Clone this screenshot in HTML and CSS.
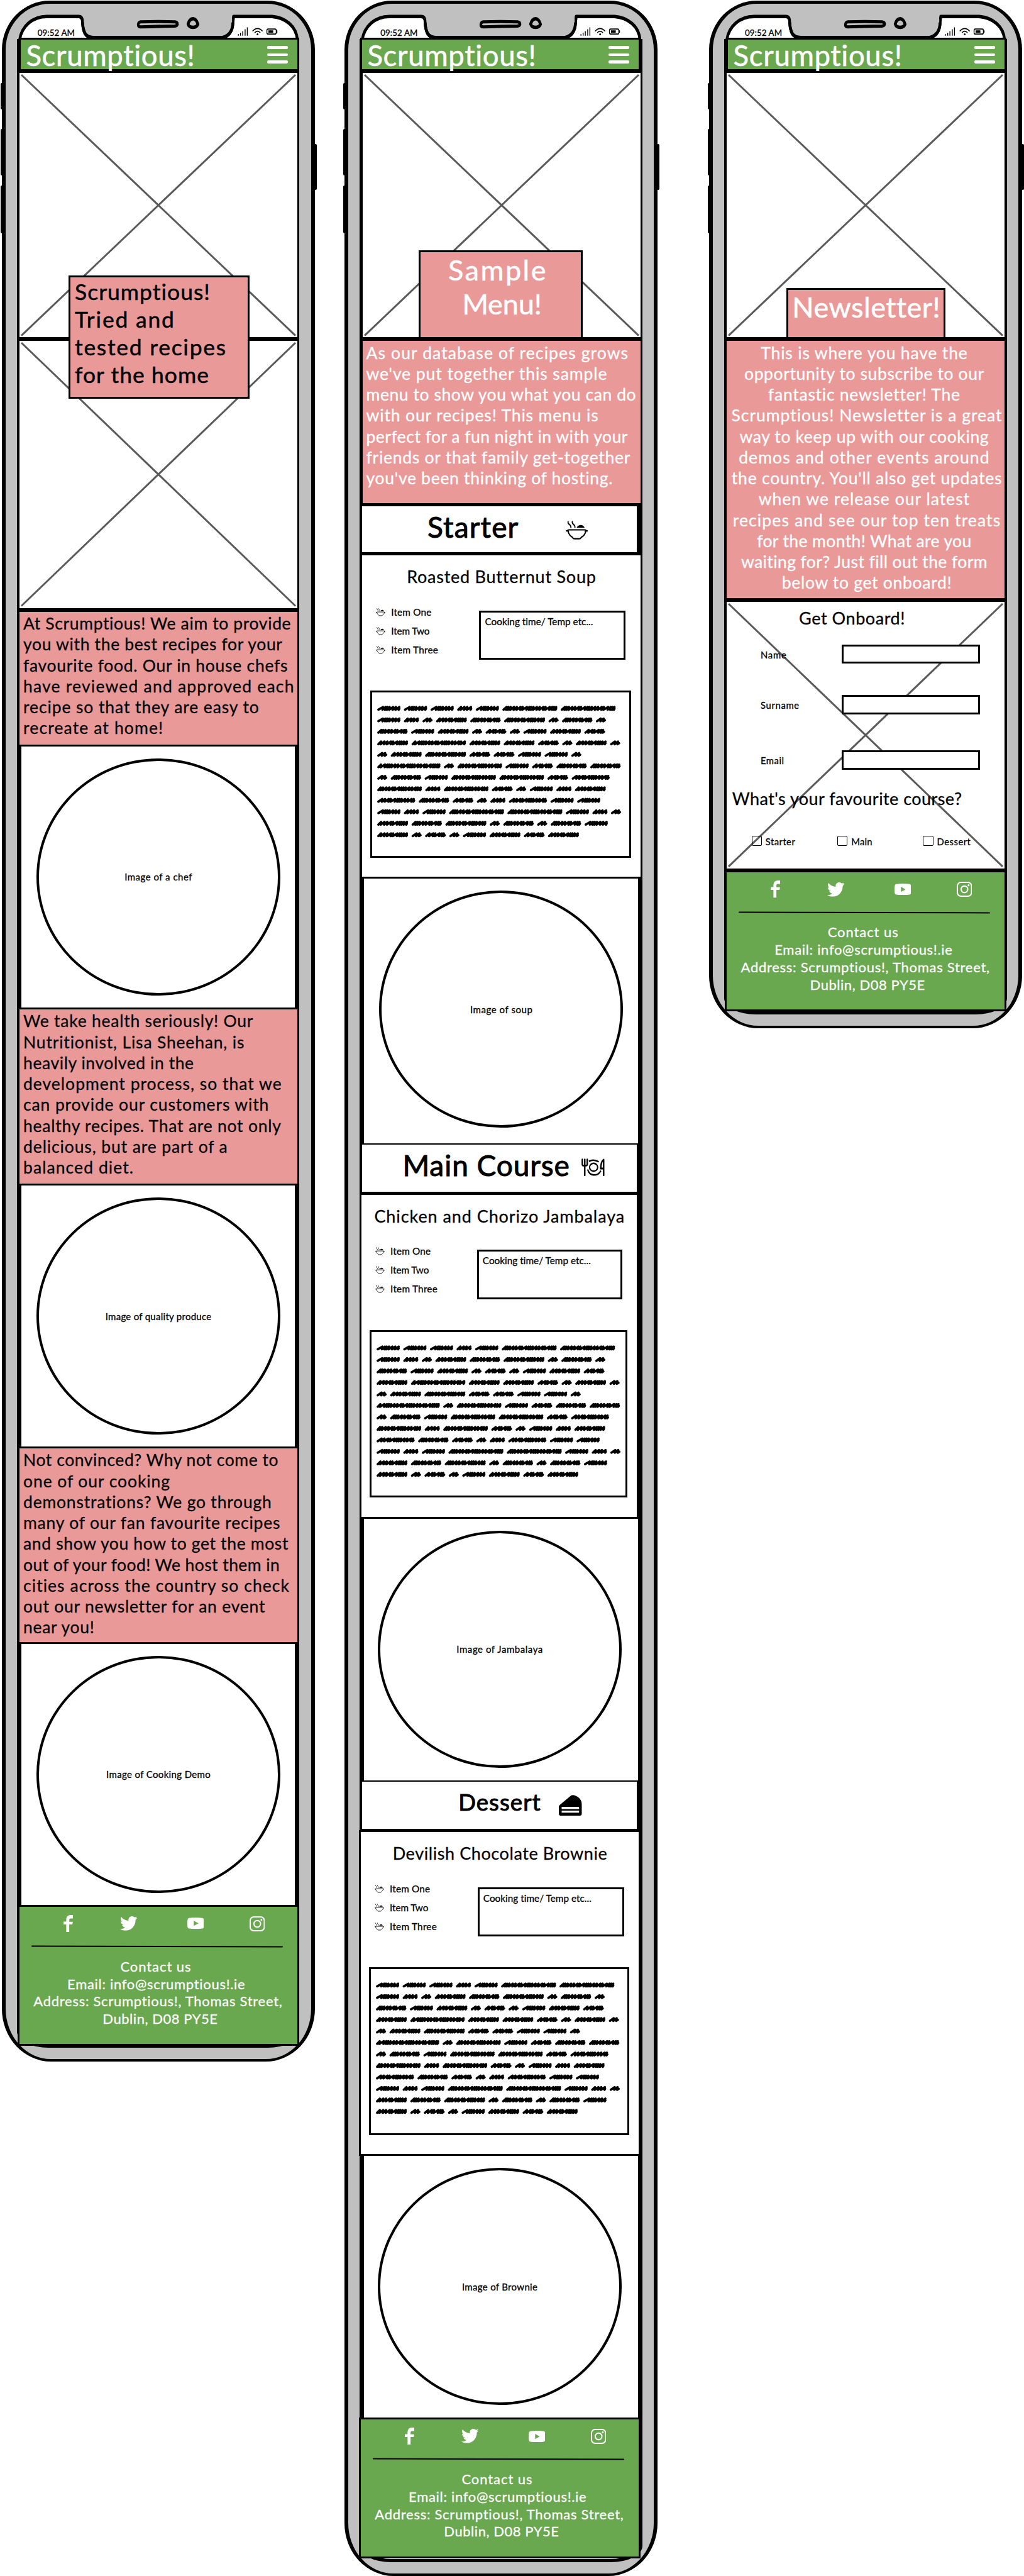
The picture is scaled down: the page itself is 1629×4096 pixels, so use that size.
FILE: index.html
```html
<!DOCTYPE html>
<html lang="en">
<head>
<meta charset="utf-8">
<title>Scrumptious! mobile wireframes</title>
<link rel="stylesheet" href="styles.css">
</head>
<body>
<svg class="defs" aria-hidden="true">
  <symbol id="top" viewBox="0 0 1460 150" preserveAspectRatio="none">
    <path d="M90 150C100 98 150 62 215 62H362Q379 62 379 84C382 122 392 141 430 141H1022Q1068 132 1070 84L1073 62H1250C1310 66 1362 98 1366 150Z" fill="#fff" stroke="#000" stroke-width="13" stroke-linejoin="round"/>
    <path d="M386 70H1066V84Q1064 128 1022 135H430Q388 132 386 84Z" fill="#c0c0c0"/>
    <path d="M379 84C382 122 392 141 430 141H1022Q1068 132 1070 84" fill="none" stroke="#000" stroke-width="13"/>
    <path d="M646 82Q725 80 804 82Q816 84 815 91Q814 97 802 98Q725 99 646 101Q634 101 635 92Q636 83 646 82Z" fill="#c0c0c0" stroke="#000" stroke-width="12"/>
    <path d="M887 70Q903 72 909 91Q905 102 887 103Q867 102 864 90Q870 71 887 70Z" fill="#c0c0c0" stroke="#000" stroke-width="13"/>
    <path d="M1095 134V128M1105 134V123M1115 134V117M1126 134V110M1136 134V103" stroke="#000" stroke-width="4"/>
    <path d="M1160 117Q1183 97 1206 117M1170 123Q1183 112 1196 123" fill="none" stroke="#000" stroke-width="4"/>
    <circle cx="1183" cy="129" r="4"/>
    <rect x="1226" y="109" width="43" height="19" rx="6" fill="none" stroke="#000" stroke-width="4"/>
    <path d="M1233 114h22v9h-22zM1270 114h4v9h-4z"/>
  </symbol>
  <symbol id="facebook" viewBox="354 856 45 79" preserveAspectRatio="none"><path d="M399 856V872H388Q381 872 381 878V887H398L396 899H381V935H367V899H354V886H367V876Q368 856 388 856Z"/></symbol>
  <symbol id="twitter" viewBox="0 48 512 416" preserveAspectRatio="none"><path d="M459.37 151.716c.325 4.548.325 9.097.325 13.645 0 138.72-105.583 298.558-298.558 298.558-59.452 0-114.68-17.219-161.137-47.106 8.447.974 16.568 1.299 25.34 1.299 49.055 0 94.213-16.568 130.274-44.832-46.132-.975-84.792-31.188-98.112-72.772 6.498.974 12.995 1.624 19.818 1.624 9.421 0 18.843-1.3 27.614-3.573-48.081-9.747-84.143-51.98-84.143-102.985v-1.299c13.969 7.797 30.214 12.67 47.431 13.319-28.264-18.843-46.781-51.005-46.781-87.391 0-19.492 5.197-37.36 14.294-52.954 51.655 63.675 129.3 105.258 216.365 109.807-1.624-7.797-2.599-15.918-2.599-24.04 0-57.828 46.782-104.934 104.934-104.934 30.213 0 57.502 12.67 76.67 33.137 23.715-4.548 46.456-13.32 66.599-25.34-7.798 24.366-24.366 44.833-46.132 57.827 21.117-2.273 41.584-8.122 60.426-16.243-14.292 20.791-32.161 39.308-52.628 54.253z"/></symbol>
  <symbol id="youtube" viewBox="0 0 80 52" preserveAspectRatio="none"><path fill-rule="evenodd" d="M8 2Q40-2 72 2Q78 3 79 10Q81 26 79 42Q78 49 72 50Q40 54 8 50Q2 49 1 42Q-1 26 1 10Q2 3 8 2ZM31 14V38L53 26Z"/></symbol>
  <symbol id="instagram" viewBox="0 0 74 68" preserveAspectRatio="none"><rect x="3" y="3" width="68" height="62" rx="17" fill="none" stroke="#fff" stroke-width="6"/><ellipse cx="37" cy="34" rx="16" ry="15" fill="none" stroke="#fff" stroke-width="6"/><circle cx="57" cy="16" r="4.5"/></symbol>
  <symbol id="soup" viewBox="1036 119 104 77" preserveAspectRatio="none">
    <path d="M1039 159H1047Q1043 155 1050 155H1126Q1133 155 1129 159H1137M1046 159C1050 172 1058 180 1067 184Q1070 190 1076 190H1100Q1106 190 1109 184C1119 180 1127 172 1131 159M1047 123C1043 134 1062 133 1060 145M1067 123C1063 134 1082 133 1079 145" fill="none" stroke="#000" stroke-width="5.5" stroke-linecap="round"/>
    <path d="M1087 147C1094 133 1116 131 1125 147Z"/>
  </symbol>
  <symbol id="dinner" viewBox="1103 123 109 68" preserveAspectRatio="none">
    <path d="M1107 127V146Q1107 151 1118 151Q1130 151 1130 146V127M1118.500 127V188M1207 188V128Q1195 132 1193 162H1205" fill="none" stroke="#000" stroke-width="7" stroke-linecap="round" stroke-linejoin="round"/>
    <path d="M1138 134Q1160 124 1184 136M1132 165C1140 192 1180 194 1194 170" fill="none" stroke="#000" stroke-width="6"/>
    <ellipse cx="1160" cy="157" rx="19" ry="15" fill="none" stroke="#000" stroke-width="6"/>
  </symbol>
  <symbol id="cake" viewBox="998 124 106 78" preserveAspectRatio="none">
    <path fill-rule="evenodd" d="M1055 126Q1062 123 1074 127C1092 133 1104 145 1104 160V194Q1104 202 1096 202H1006Q998 202 998 194V168Q998 164 1003 161ZM1011 169V177H1091V169ZM1011 183V191H1091V183Z"/>
  </symbol>
</svg>

<main class="phones">
  <!-- Home -->
  <section class="phone home">
    <div class="shell"><i class="btn b1"></i><i class="btn b2"></i><i class="btn b3"></i><i class="btn b4"></i><div class="body"></div><div class="glass"></div><svg class="top"><use href="#top"/></svg></div>
    <div class="status"><span data-w="57.8">09:52 AM</span></div>
    <header class="bar"><span data-w="265.3">Scrumptious!</span><div class="burger"><i></i><i></i><i></i></div></header>
    <div class="photo p427"><svg class="cross"><line x1="0" y1="0" x2="100%" y2="100%"/><line x1="100%" y1="0" x2="0" y2="100%"/></svg></div>
    <div class="photo p430"><svg class="cross"><line x1="0" y1="0" x2="100%" y2="100%"/><line x1="100%" y1="0" x2="0" y2="100%"/></svg>
      <div class="hero intro"><span data-w="213">Scrumptious!</span><span data-w="156.2">Tried and</span><span data-w="238.3">tested recipes</span><span data-w="210.5">for the home</span></div>
    </div>
    <div class="copy c1"><span data-w="424">At Scrumptious! We aim to provide</span><span data-w="410">you with the best recipes for your</span><span data-w="418.5">favourite food. Our in house chefs</span><span data-w="429">have reviewed and approved each</span><span data-w="373">recipe so that they are easy to</span><span data-w="220.6">recreate at home!</span></div>
    <div class="round r1"><div class="circle"><span data-w="106.3">Image of a chef</span></div></div>
    <div class="copy c2"><span data-w="363.6">We take health seriously! Our</span><span data-w="350">Nutritionist, Lisa Sheehan, is</span><span data-w="269">heavily involved in the</span><span data-w="409">development process, so that we</span><span data-w="388.6">can provide our customers with</span><span data-w="408">healthy recipes. That are not only</span><span data-w="323">delicious, but are part of a</span><span data-w="173.5">balanced diet.</span></div>
    <div class="round r1"><div class="circle"><span data-w="167.3">Image of quality produce</span></div></div>
    <div class="copy c3"><span data-w="403.5">Not convinced? Why not come to</span><span data-w="231.3">one of our cooking</span><span data-w="393.4">demonstrations? We go through</span><span data-w="406.6">many of our fan favourite recipes</span><span data-w="419.4">and show you how to get the most</span><span data-w="405.5">out of your food! We host them in</span><span data-w="421.8">cities across the country so check</span><span data-w="381.6">out our newsletter for an event</span><span data-w="110.8">near you!</span></div>
    <div class="round r1"><div class="circle"><span data-w="164.5">Image of Cooking Demo</span></div></div>
    <footer class="foot">
      <div class="social"><svg class="fb"><use href="#facebook"/></svg><svg class="tw"><use href="#twitter"/></svg><svg class="yt"><use href="#youtube"/></svg><svg class="ig"><use href="#instagram"/></svg></div>
      <hr>
      <address><span class="l1" data-w="110.8">Contact us</span><span class="l2" data-w="281.5">Email: info@scrumptious!.ie</span><span class="l3" data-w="394.4">Address: Scrumptious!, Thomas Street,</span><span class="l4" data-w="181">Dublin, D08 PY5E</span></address>
    </footer>
  </section>

  <!-- Menu -->
  <section class="phone menu">
    <div class="shell"><i class="btn b1"></i><i class="btn b2"></i><i class="btn b3"></i><i class="btn b4"></i><div class="body"></div><div class="glass"></div><svg class="top"><use href="#top"/></svg></div>
    <div class="status"><span data-w="57.8">09:52 AM</span></div>
    <header class="bar"><span data-w="265.3">Scrumptious!</span><div class="burger"><i></i><i></i><i></i></div></header>
    <div class="photo p427"><svg class="cross"><line x1="0" y1="0" x2="100%" y2="100%"/><line x1="100%" y1="0" x2="0" y2="100%"/></svg>
      <div class="hero sample"><span class="s1" data-w="153.4">Sample</span><span data-w="122">Menu!</span></div>
    </div>
    <div class="copy light c4"><span data-w="414.9">As our database of recipes grows</span><span data-w="381.3">we've put together this sample</span><span data-w="427">menu to show you what you can do</span><span data-w="367.4">with our recipes! This menu is</span><span data-w="413.8">perfect for a fun night in with your</span><span data-w="418">friends or that family get-together</span><span data-w="390.6">you've been thinking of hosting.</span></div>

    <h2 class="course starter"><span data-w="141">Starter</span><svg><use href="#soup"/></svg></h2>
    <article class="card k1">
      <h3><span data-w="297.8">Roasted Butternut Soup</span></h3>
      <div class="info">
        <ul><li><svg><use href="#soup"/></svg><span data-w="62.7">Item One</span></li><li><svg><use href="#soup"/></svg><span data-w="59.6">Item Two</span></li><li><svg><use href="#soup"/></svg><span data-w="73.4">Item Three</span></li></ul>
        <div class="time"><span data-w="170.7">Cooking time/ Temp etc...</span></div>
      </div>
      <div class="method"></div>
    </article>
    <div class="round r2"><div class="circle"><span data-w="98">Image of soup</span></div></div>

    <h2 class="course main"><span data-w="261.8">Main Course</span><svg><use href="#dinner"/></svg></h2>
    <article class="card k2">
      <h3><span data-w="396">Chicken and Chorizo Jambalaya</span></h3>
      <div class="info">
        <ul><li><svg><use href="#soup"/></svg><span data-w="62.7">Item One</span></li><li><svg><use href="#soup"/></svg><span data-w="59.6">Item Two</span></li><li><svg><use href="#soup"/></svg><span data-w="73.4">Item Three</span></li></ul>
        <div class="time"><span data-w="170.7">Cooking time/ Temp etc...</span></div>
      </div>
      <div class="method"></div>
    </article>
    <div class="round r3"><div class="circle"><span data-w="136">Image of Jambalaya</span></div></div>

    <h2 class="course dessert"><span data-w="127.8">Dessert</span><svg><use href="#cake"/></svg></h2>
    <article class="card k3">
      <h3><span data-w="339">Devilish Chocolate Brownie</span></h3>
      <div class="info">
        <ul><li><svg><use href="#soup"/></svg><span data-w="62.7">Item One</span></li><li><svg><use href="#soup"/></svg><span data-w="59.6">Item Two</span></li><li><svg><use href="#soup"/></svg><span data-w="73.4">Item Three</span></li></ul>
        <div class="time"><span data-w="170.7">Cooking time/ Temp etc...</span></div>
      </div>
      <div class="method"></div>
    </article>
    <div class="round r4"><div class="circle"><span data-w="118.800">Image of Brownie</span></div></div>
    <footer class="foot">
      <div class="social"><svg class="fb"><use href="#facebook"/></svg><svg class="tw"><use href="#twitter"/></svg><svg class="yt"><use href="#youtube"/></svg><svg class="ig"><use href="#instagram"/></svg></div>
      <hr>
      <address><span class="l1" data-w="110.8">Contact us</span><span class="l2" data-w="281.5">Email: info@scrumptious!.ie</span><span class="l3" data-w="394.4">Address: Scrumptious!, Thomas Street,</span><span class="l4" data-w="181">Dublin, D08 PY5E</span></address>
    </footer>
  </section>

  <!-- Newsletter -->
  <section class="phone news">
    <div class="shell"><i class="btn b1"></i><i class="btn b2"></i><i class="btn b3"></i><i class="btn b4"></i><div class="body"></div><div class="glass"></div><svg class="top"><use href="#top"/></svg></div>
    <div class="status"><span data-w="57.8">09:52 AM</span></div>
    <header class="bar"><span data-w="265.3">Scrumptious!</span><div class="burger"><i></i><i></i><i></i></div></header>
    <div class="photo p427"><svg class="cross"><line x1="0" y1="0" x2="100%" y2="100%"/><line x1="100%" y1="0" x2="0" y2="100%"/></svg>
      <div class="hero letter"><span data-w="230">Newsletter!</span></div>
    </div>
    <div class="copy light center c5"><span data-w="326.7">This is where you have the</span><span data-w="379.2">opportunity to subscribe to our</span><span data-w="302.6">fantastic newsletter! The</span><span class="full" data-w="428">Scrumptious! Newsletter is a great</span><span data-w="394">way to keep up with our cooking</span><span data-w="396.9">demos and other events around</span><span class="full" data-w="427.7">the country. You'll also get updates</span><span data-w="333.8">when we release our latest</span><span class="full" data-w="424">recipes and see our top ten treats</span><span data-w="338.9">for the month! What are you</span><span data-w="389.4">waiting for? Just fill out the form</span><span class="full" data-w="268">below to get onboard!</span></div>
    <div class="photo form"><svg class="cross"><line x1="0" y1="0" x2="100%" y2="100%"/><line x1="100%" y1="0" x2="0" y2="100%"/></svg>
      <h3><span data-w="166.4">Get Onboard!</span></h3>
      <div class="field f1"><span data-w="40">Name</span><div class="input"></div></div>
      <div class="field f2"><span data-w="60.3">Surname</span><div class="input"></div></div>
      <div class="field f3"><span data-w="36">Email</span><div class="input"></div></div>
      <h4><span data-w="363">What's your favourite course?</span></h4>
      <div class="checks"><div><i></i><span data-w="46">Starter</span></div><div><i></i><span data-w="32.2">Main</span></div><div><i></i><span data-w="52.4">Dessert</span></div></div>
    </div>
    <footer class="foot">
      <div class="social"><svg class="fb"><use href="#facebook"/></svg><svg class="tw"><use href="#twitter"/></svg><svg class="yt"><use href="#youtube"/></svg><svg class="ig"><use href="#instagram"/></svg></div>
      <hr>
      <address><span class="l1" data-w="110.8">Contact us</span><span class="l2" data-w="281.5">Email: info@scrumptious!.ie</span><span class="l3" data-w="394.4">Address: Scrumptious!, Thomas Street,</span><span class="l4" data-w="181">Dublin, D08 PY5E</span></address>
    </footer>
  </section>
</main>
<script src="wireframe.js"></script>
</body>
</html>
```
FILE: styles.css
```css
* { box-sizing: border-box; }
html, body { margin: 0; padding: 0; background: #fff; }
body { width: 1629px; height: 4096px; overflow: hidden; color: #000; font-family: Lato, "Open Sans", sans-serif; font-kerning: normal; -webkit-text-stroke: .018em currentColor; }
h2, h3, h4, ul, hr { margin: 0; padding: 0; font-weight: 400; }
ul { list-style: none; }
svg { display: block; }
span { white-space: nowrap; translate: .02em .035em; }
.bar, .hero, .course { -webkit-text-stroke: .5px currentColor; }
.defs { position: absolute; width: 0; height: 0; }

.phones { display: grid; grid-template-columns: 543px 582.2px 503.8px; align-items: start; }
.phone { position: relative; display: flex; flex-direction: column; align-items: flex-start; }
.phone > :not(.shell) { position: relative; flex: none; }
.home { height: 3278px; }
.menu { height: 4095.5px; }
.news { height: 1635px; }

/* Device casing, drawn behind the screen content */
.shell { position: absolute; top: 0; bottom: 0; left: 0; width: 505px; }
.menu .shell { left: 2.3px; }
.body { position: absolute; left: 2.8px; top: .5px; bottom: 0; width: 498.2px; background: #c0c0c0; border: solid #000; border-width: 5px 6px 4.5px; border-radius: 76px 76px 78px 78px / 78px 78px 84px 84px; }
.glass { position: absolute; left: 26.700px; top: 62px; bottom: 22px; width: 449.8px; background: #fff; border: solid #000; border-width: 0 7px 5px; border-radius: 0 0 50px 50px / 0 0 26px 26px; }
.top { position: absolute; left: 0; top: 0; width: 505.6px; height: 63.5px; }
.btn { position: absolute; width: 4px; background: #000; border-radius: 2px; left: .7px; }
.b1 { top: 132px; height: 42px; }
.b2 { top: 205px; height: 74px; }
.b3 { top: 295px; height: 76px; }
.b4 { left: 500px; top: 229px; height: 73px; }

.status { height: 59.5px; padding: 42px 0 0 59.5px; font-size: 13.3px; line-height: 20px; }
.menu .status { padding-left: 62px; }

.bar { display: flex; justify-content: space-between; width: 446.500px; height: 53px; margin-left: 29.5px; padding: 0 15.5px 0 8px; border: 3px solid #000; background: #6aa84f; color: #fff; font-size: 45.500px; line-height: 45px; }
.burger { display: flex; flex-direction: column; gap: 7.1px; padding-top: 10.8px; }
.burger i { width: 32.3px; height: 4.4px; border-radius: 2.2px; background: #fff; }

.photo { position: relative; width: 448px; margin-left: 28px; border: 3px solid #000; background: #fff; }
.menu .photo { margin-left: 30.5px; }
.p427 { height: 426.6px; }
.p430 { height: 430.5px; }
.cross { position: absolute; left: 3px; top: 3px; width: calc(100% - 6px); height: calc(100% - 6px); overflow: visible; stroke: #5a5a5c; stroke-width: 3; }

.hero { position: absolute; display: flex; flex-direction: column; background: #ea9999; border: 3px solid #000; }
.hero.intro { left: 78.300px; top: -104.5px; width: 288.2px; height: 196px; padding-left: 6px; font-size: 35.500px; line-height: 44.2px; }
.hero.sample { left: 89.8px; bottom: -2.7px; width: 260.4px; height: 140.5px; align-items: center; color: #fff; font-size: 45px; line-height: 55px; }
.hero.sample span { margin-top: -1px; transform: translateX(1px); }
.hero.sample .s1 { transform: translateX(-5.4px); }
.hero.letter { left: 94.400px; bottom: -2.7px; width: 253.5px; height: 81px; align-items: center; color: #fff; font-size: 45px; line-height: 50px; }

.copy { display: flex; flex-direction: column; width: 448px; margin-left: 28px; padding: 1.500px 0 0 5.500px; background: #ea9999; border: 3px solid #000; font-size: 26.500px; line-height: 33.25px; }
.menu .copy { margin-left: 30.5px; }
.light { color: #fff; }
.center { align-items: center; padding-left: 0; }
.center span { transform: translateX(-2.8px); }
.center .full { transform: translateX(1.3px); }
.c1 { height: 217.4px; }
.c2 { height: 283.2px; }
.c3 { height: 313.800px; }
.c4 { height: 263.8px; }
.c5 { height: 415.3px; }

.round { padding: 19px 0 0 57.8px; }
.circle { display: flex; align-items: center; justify-content: center; width: 388px; height: 377px; border: 4.300px solid #000; border-radius: 50%; font-size: 15px; line-height: 18px; }
.circle span { transform: translateY(-1px); }
.r1 { height: 414.9px; }
.r2 { height: 420.7px; padding-left: 60.4px; }
.r3 { height: 416px; }
.r4 { height: 415.7px; }

.course { display: flex; width: 441.5px; margin-left: 30.5px; padding: 1.500px 0 0; border: 2.500px solid #000; background: #fff; font-size: 46px; line-height: 60px; -webkit-text-stroke: 1px currentColor; }
.starter { height: 77.4px; padding-left: 103.500px; }
.starter svg { width: 35.3px; height: 31px; margin: 21.500px 0 0 75.500px; }
.main { height: 79.2px; padding-left: 64px; }
.main svg { width: 37px; height: 28px; margin: 20.500px 0 0 19.500px; }
.dessert { height: 79.6px; padding-left: 153px; font-size: 36.5px; }
.dessert svg { width: 36.7px; height: 33px; margin: 20px 0 0 29px; }

.card { padding-top: 12.500px; border: 3px solid #000; background: #fff; }
.k1 { width: 448.5px; height: 517px; margin-left: 30.1px; }
.k2 { width: 444.4px; height: 517.7px; margin-left: 29px; }
.k3 { width: 448px; height: 517.6px; margin-left: 28px; }
.card h3 { display: flex; justify-content: center; font-size: 27px; line-height: 40px; }
.info { display: flex; height: 162.200px; padding: 20.8px 23.500px 0 21.800px; justify-content: space-between; }
.info li { display: flex; height: 30px; font-size: 15.300px; line-height: 30px; }
.info li svg { width: 15px; height: 13px; margin: 10px 9px 0 0; }
.time { width: 233px; height: 78.4px; margin-top: 14px; padding: 3px 0 0 6px; border: 3px solid #000; font-size: 15.3px; line-height: 21px; }
.k2 .time { width: 231.4px; }
.method { height: 266.5px; margin: 0 15px 0 12.600px; padding: 18px 0 0 8px; border: 3px solid #000; }
.method svg { width: 395px; height: 230px; fill: none; stroke: #000; stroke-width: 3.7; stroke-linecap: round; stroke-linejoin: round; }

.form { height: 429.8px; padding: 5px 0 0; }
.form > :not(.cross) { position: relative; }
.form h3 { padding-left: 114.300px; font-size: 27px; line-height: 40px; }
.field { display: flex; justify-content: space-between; padding: 0 39.300px 0 53.500px; font-size: 14.8px; line-height: 30px; }
.f1 { margin-top: 22.300px; }
.f2 { margin-top: 50.5px; }
.f3 { margin-top: 57.700px; }
.input { width: 220.3px; height: 30.3px; background: #fff; border: 3px solid #000; }
.form h4 { margin-top: 25.500px; padding-left: 8px; font-size: 27px; line-height: 40px; }
.checks { display: grid; grid-template-columns: 136.4px 136.4px auto; padding-left: 39.500px; margin-top: 40px; font-size: 14.8px; line-height: 16px; }
.checks div { display: flex; gap: 5.500px; }
.checks i { width: 16.3px; height: 16px; border: 1.700px solid #000; border-radius: 2px; }

.foot { width: 448px; height: 224px; margin-left: 28px; border: 3px solid #000; background: #6aa84f; color: #fff; }
.social { display: flex; align-items: center; height: 28px; margin: 13px 0 0 70px; fill: #fff; }
.fb { width: 15.2px; height: 27.5px; }
.tw { width: 27.400px; height: 22.8px; margin-left: 74.8px; }
.yt { width: 26.6px; height: 18.3px; margin-left: 79.3px; }
.ig { width: 24.500px; height: 24px; margin-left: 72.4px; }
.foot hr { width: 400px; height: 2.200px; margin: 21.500px 0 0 19px; border: 0; border-radius: 2px; background: #000; transform: rotate(.14deg); }
.foot address { display: flex; flex-direction: column; align-items: center; margin-top: 15.500px; font-style: normal; font-size: 22px; line-height: 27.8px; }
.l1 { transform: translateX(-4.500px); }
.l2 { transform: translateX(-3.700px); }
.l3 { transform: translateX(-1px); }
.l4 { transform: translateX(2.500px); }
```
FILE: wireframe.js
```js
// Track each line of text out to its drawn width (data-w, in pixels).
document.querySelectorAll('[data-w]').forEach(function (el) {
  el.style.display = 'inline-block';
  el.style.alignSelf = el.parentElement.matches('.copy:not(.center), .intro') ? 'flex-start' : '';
  var size = parseFloat(getComputedStyle(el).fontSize);
  var natural = el.getBoundingClientRect().width;
  var target = parseFloat(el.dataset.w) + size * 0.1;
  el.style.letterSpacing = (target - natural) / el.textContent.length + 'px';
});

// Scribbled placeholder words: every row lists its word lengths.
var rows = [
  [107, 107, 107, 70, 107, 252, 252],
  [107, 70, 47, 142, 140, 188, 47, 140, 47],
  [140, 107, 142, 47, 96, 47, 107, 142, 96],
  [142, 250, 142, 142, 96, 47, 142, 47],
  [47, 142, 188, 96, 96, 107, 107, 47],
  [290, 47, 205, 107, 96, 140, 140],
  [47, 140, 107, 205, 205, 96, 175],
  [205, 70, 205, 96, 47, 107, 70, 142],
  [175, 140, 96, 47, 70, 175, 107, 107],
  [107, 70, 107, 252, 252, 107, 70, 47],
  [142, 140, 188, 47, 140, 47, 140, 107],
  [142, 47, 96, 47, 107, 142, 96, 142]
];
var unit = 0.3475;
var steps = [5.2, 6.4, 4, 7.2, 4.6, 3.6, 4.2, 6];
function word(x, y, w, seed) {
  var end = x + w - 2, px = x + 2, d = 'M' + px.toFixed(1) + ' ' + (y + 2).toFixed(1), i = seed;
  while (px < end - 3) {
    var s = steps[i++ % steps.length];
    var peak = Math.min(px + s, end);
    d += 'L' + peak.toFixed(1) + ' ' + (y - 2.1).toFixed(1);
    px = Math.min(peak - 0.6, end - 1);
    d += 'L' + px.toFixed(1) + ' ' + (y + 2.1).toFixed(1);
  }
  return d + 'L' + end.toFixed(1) + ' ' + (y + 0.6).toFixed(1);
}
var path = '';
rows.forEach(function (row, r) {
  var x = 0;
  row.forEach(function (w) {
    path += word(x * unit, 7.4 + r * 18.27, w * unit, w % 8);
    x += w + 15;
  });
});
document.querySelectorAll('.method').forEach(function (box) {
  box.innerHTML = '<svg><path d="' + path + '"/></svg>';
});
```
